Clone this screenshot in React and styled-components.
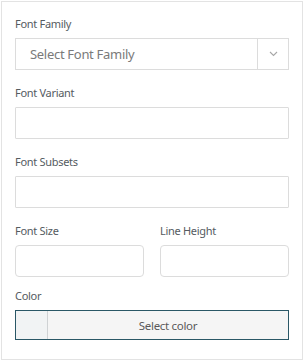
import React from "react";
import styled, { createGlobalStyle } from "styled-components";

const GlobalStyle = createGlobalStyle`
  body {
    margin: 0;
    background: #ffffff;
    font-family: "Noto Sans", "Open Sans", sans-serif;
  }
`;

const Panel = styled.div`
  box-sizing: border-box;
  width: 302px;
  height: 359px;
  margin: 1px;
  border: 1px solid #e3e3e3;
  padding: 14px 13px;
  background: #fff;
`;

const Field = styled.div`
  margin-bottom: ${(p) => p.$gap ?? 15}px;
`;

const Label = styled.div`
  font-size: 11px;
  letter-spacing: -0.3px;
  line-height: 16px;
  color: #555b61;
  margin-bottom: 6px;
`;

const Row = styled.div`
  display: grid;
  grid-template-columns: 1fr 1fr;
  gap: 16px;
`;

const Input = styled.div`
  box-sizing: border-box;
  height: 32px;
  border: 1px solid #dcdcdc;
  border-radius: ${(p) => (p.$round ? 4 : 1)}px;
  background: #fff;
`;

const Select = styled.div`
  box-sizing: border-box;
  height: 32px;
  border: 1px solid #dcdcdc;
  display: flex;
  align-items: stretch;
`;

const Placeholder = styled.div`
  flex: 1;
  display: flex;
  align-items: center;
  padding-left: 14px;
  font-size: 13px;
  letter-spacing: -0.3px;
  color: #7a7a7a;
`;

const Caret = styled.div`
  width: 30px;
  border-left: 1px solid #dcdcdc;
  display: flex;
  align-items: center;
  justify-content: center;
`;

const ColorButton = styled.div`
  box-sizing: border-box;
  height: 30px;
  border: 1px solid #2a5766;
  display: flex;
  background: #f5f5f5;
`;

const Swatch = styled.div`
  width: 31px;
  background: #f1f3f4;
  border-right: 1px solid #cfd2d4;
`;

const ColorText = styled.div`
  flex: 1;
  display: flex;
  align-items: center;
  justify-content: center;
  font-size: 11.5px;
  letter-spacing: -0.3px;
  color: #5a5a5a;
`;

export default function App() {
  return (
    <>
      <GlobalStyle />
      <Panel>
        <Field>
          <Label>Font Family</Label>
          <Select>
            <Placeholder>Select Font Family</Placeholder>
            <Caret>
              <svg width="9" height="6" viewBox="0 0 9 6">
                <path d="M1 1l3.5 3.5L8 1" fill="none" stroke="#a7a7a7" strokeWidth="1.1" />
              </svg>
            </Caret>
          </Select>
        </Field>
        <Field>
          <Label>Font Variant</Label>
          <Input />
        </Field>
        <Field>
          <Label>Font Subsets</Label>
          <Input />
        </Field>
        <Field $gap={11}>
          <Row>
            <div>
              <Label>Font Size</Label>
              <Input $round />
            </div>
            <div>
              <Label>Line Height</Label>
              <Input $round />
            </div>
          </Row>
        </Field>
        <Field $gap={0}>
          <Label>Color</Label>
          <ColorButton>
            <Swatch />
            <ColorText>Select color</ColorText>
          </ColorButton>
        </Field>
      </Panel>
    </>
  );
}
